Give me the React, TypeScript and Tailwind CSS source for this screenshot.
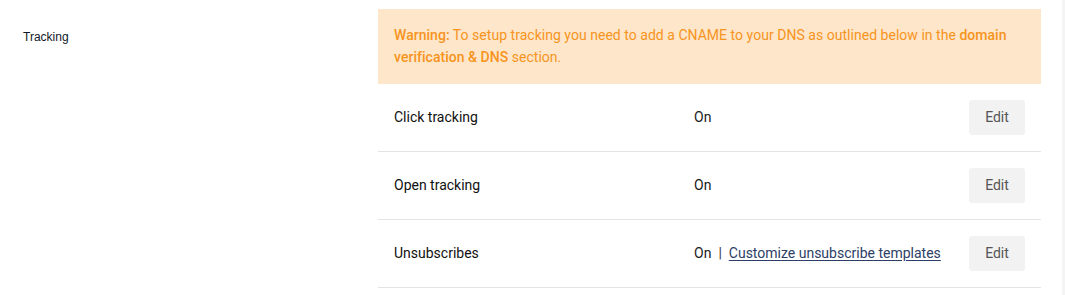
const rows = [
  { label: "Click tracking", value: "On" },
  { label: "Open tracking", value: "On" },
  { label: "Unsubscribes", value: "On", link: "Customize unsubscribe templates" },
];

export default function App() {
  return (
    <div className="flex w-[1066px] h-[295px] bg-white font-['Roboto',sans-serif] overflow-hidden">
      <div className="w-[378px] shrink-0 pl-[23px] pt-[29px]">
        <h3 className="font-['Liberation_Sans',Arial,sans-serif] text-[12px] leading-4 text-[#111827]">
          Tracking
        </h3>
      </div>

      <div className="w-[663px] shrink-0 pt-[9px]">
        <div className="bg-[#fde6c9] px-4 pt-[15px] pb-4 text-[14px] leading-[22px] tracking-[0.03px] text-[#f7941d]">
          <span className="font-medium">Warning:</span> To setup tracking you need to add a CNAME
          to your DNS as outlined below in the{" "}
          <span className="font-medium">domain verification &amp; DNS</span> section.
        </div>

        {rows.map((row) => (
          <div
            key={row.label}
            className="flex items-center border-b border-[#e4e4e7] py-4 pl-4 pr-4"
          >
            <div className="w-[300px] text-[14px] text-[#111]">{row.label}</div>
            <div className="flex-1 text-[14px] text-[#1a1a1a]">
              {row.value}
              {row.link && (
                <>
                  <span className="mx-[7px] text-[#333]">|</span>
                  <a href="#" className="text-[#2d3e66] underline underline-offset-2">
                    {row.link}
                  </a>
                </>
              )}
            </div>
            <button className="h-[35px] w-14 rounded-[3px] bg-[#f2f2f2] text-[14px] text-[#555]">
              Edit
            </button>
          </div>
        ))}
      </div>

      <div className="ml-[21px] w-[3px] bg-[#f4f4f5]" />
    </div>
  );
}
